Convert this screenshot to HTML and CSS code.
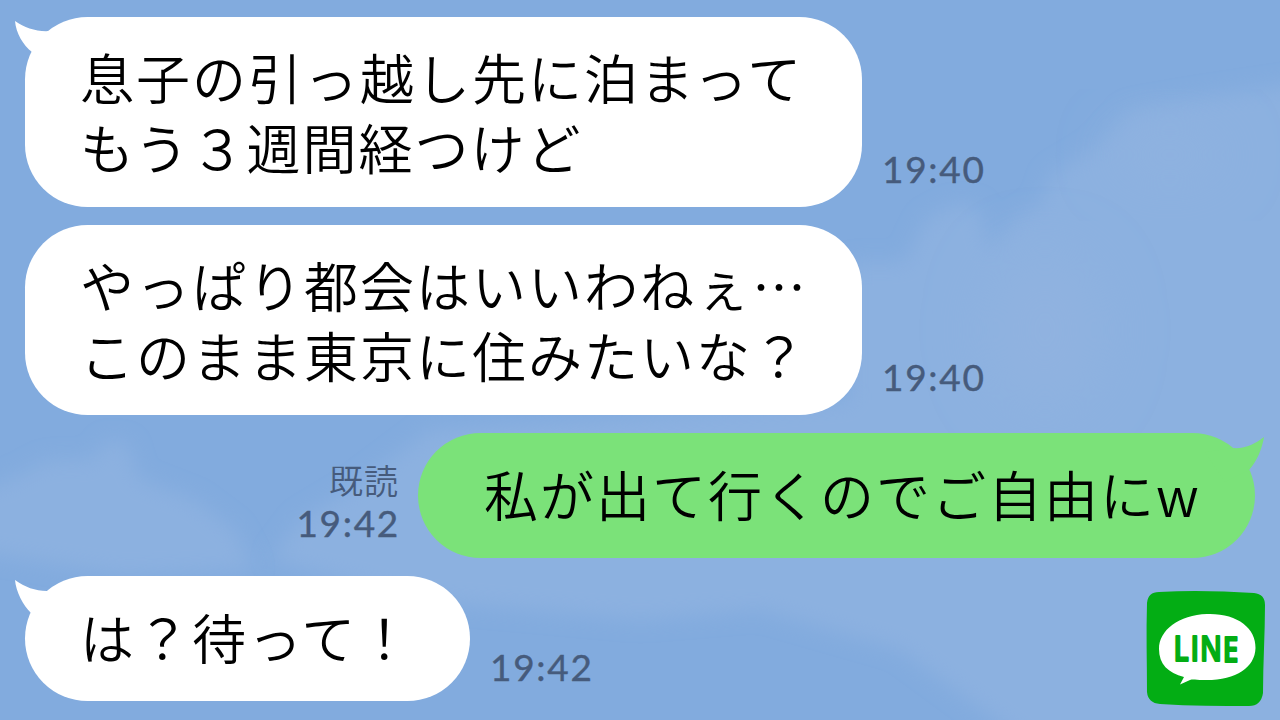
FILE: index.html
```html
<!DOCTYPE html>
<html lang="ja">
<head>
    <meta charset="UTF-8">
    <meta name="viewport" content="width=device-width, initial-scale=1.0">
    <title>LINE トーク</title>
    <link rel="stylesheet" href="styles.css">
</head>
<body>
    <svg class="sky" viewBox="0 0 1280 720" aria-hidden="true">
        <defs>
            <filter id="soft" x="-20%" y="-20%" width="140%" height="140%"><feGaussianBlur stdDeviation="10"/></filter>
            <filter id="softer" x="-60%" y="-100%" width="220%" height="300%"><feGaussianBlur stdDeviation="28"/></filter>
        </defs>
        <path class="cloud" filter="url(#soft)" d="M850 262 L905 262 L925 220 L955 204 L978 206 L990 252 L1012 222 L1040 205 L1050 175 L1095 148 L1130 110 L1200 98 L1320 80 L1320 760 L1050 760 L900 650 L760 610 L640 620 L420 600 L270 560 L300 520 L350 490 L430 430 L600 420 L850 400 Z"/>
        <path class="cloud" filter="url(#soft)" d="M-30 495 L20 475 L48 460 L92 460 L108 440 L128 444 L138 478 L195 500 L235 530 L255 570 L120 575 L-30 550 Z"/>
        <ellipse class="haze" filter="url(#softer)" cx="1170" cy="155" rx="55" ry="22"/>
        <ellipse class="haze" filter="url(#softer)" cx="1045" cy="330" rx="60" ry="80"/>
    </svg>

    <main class="chat">
        <div class="message">
            <div class="bubble">
                <svg class="tail" viewBox="0 0 60 50"><path d="M0 3 C10 10 22 14 35 13 L60 18 L40 48 L17 34 C8 27 1 15 0 3Z"/></svg>
                <p>息子の引っ越し先に泊まって<br>もう３週間経つけど</p>
            </div>
            <div class="meta"><time>19:40</time></div>
        </div>

        <div class="message">
            <div class="bubble">
                <p>やっぱり都会はいいわねぇ…<br>このまま東京に住みたいな？</p>
            </div>
            <div class="meta"><time>19:40</time></div>
        </div>

        <div class="message mine">
            <div class="meta">
                <span class="read">既読</span>
                <time>19:42</time>
            </div>
            <div class="bubble">
                <svg class="tail" viewBox="0 0 60 50"><path d="M1 3 C10 10 20 15 32 14 L60 18 L40 48 L16 36 C8 27 3 15 1 3Z"/></svg>
                <p>私が出て行くのでご自由にw</p>
            </div>
        </div>

        <div class="message short">
            <div class="bubble">
                <svg class="tail" viewBox="0 0 60 50"><path d="M0 3 C10 10 20 14 32 14 L60 18 L40 48 L16 36 C8 28 1 15 0 3Z"/></svg>
                <p>は？待って！</p>
            </div>
            <div class="meta"><time>19:42</time></div>
        </div>
    </main>

    <svg class="line-logo" viewBox="0 0 120 117">
        <path class="logo-bg" d="M13 2 C45 0 75 1 108 3 Q119 4 119 15 C119 43 117 73 117 103 Q115 116 103 116 C75 116 45 116 14 114 Q2 113 1 102 C1 73 0 43 1 13 Q2 2 13 2Z"/>
        <path class="logo-balloon" d="M61 24 C91 23 110 38 109.500 58 C109 78 89 91 57 90 C50 90 47 89 44 90 L34 94.500 L38 87 C22 83 13 74 13 59 C13 40 33 25 61 24Z"/>
        <text class="logo-text" transform="scale(0.8 1)" x="34.500 55.500 67.500 96" y="71.500 71.500 71.500 72.500">LINE</text>
    </svg>
</body>
</html>
```
FILE: styles.css
```css
:root {
    --sky: #82abde;
    --cloud: #8cb1e0;
    --haze: #90b2e0;
    --green: #7be279;
    --meta: #465b7c;
}
* {
    box-sizing: border-box;
}
body {
    margin: 0;
    width: 1280px;
    height: 720px;
    overflow: hidden;
    position: relative;
    background: var(--sky);
    font-family: 'Noto Sans CJK JP', sans-serif;
}
.sky {
    position: absolute;
    top: 0;
    left: 0;
    width: 100%;
    height: 100%;
}
.cloud {
    fill: var(--cloud);
}
.haze {
    fill: var(--haze);
}
.chat {
    position: relative;
    display: flex;
    flex-direction: column;
    gap: 18px;
    padding: 17px 25px;
}
.message {
    display: flex;
    align-items: flex-end;
    gap: 20px;
}
.bubble {
    position: relative;
    width: 837px;
    padding: 25px 0 25px 55px;
    border-radius: 62.5px;
    background: #fff;
    color: #000;
}
.bubble p {
    margin: 0;
    font-size: 54px;
    font-weight: 350;
    line-height: 70px;
    letter-spacing: 2px;
    white-space: nowrap;
}
.short .bubble,
.mine .bubble {
    padding-top: 26px;
    padding-bottom: 29px;
}
.short .bubble {
    width: 445px;
}
.tail {
    position: absolute;
    top: 1px;
    left: -10px;
    width: 60px;
    height: 50px;
    fill: #fff;
}
.mine {
    justify-content: flex-end;
}
.mine .bubble {
    padding-left: 66px;
    background: var(--green);
}
.mine .tail {
    left: auto;
    right: -10px;
    fill: var(--green);
    transform: scaleX(-1);
}
.meta {
    display: flex;
    flex-direction: column;
    padding-bottom: 16px;
    color: var(--meta);
    font-family: Lato, sans-serif;
    font-size: 37px;
    line-height: 44px;
    letter-spacing: 1.7px;
}
.meta time {
    -webkit-text-stroke: 0.4px var(--meta);
}
.short .meta {
    padding-bottom: 12px;
}
.mine .meta {
    align-items: flex-end;
    padding-bottom: 13px;
    margin-right: -2px;
}
.read {
    font-family: 'Noto Sans CJK JP', sans-serif;
    font-size: 34px;
    font-weight: 350;
    line-height: 42px;
    letter-spacing: 1px;
    margin-right: 1px;
}
.line-logo {
    position: absolute;
    left: 1146px;
    top: 590px;
    width: 120px;
    height: 117px;
}
.logo-bg {
    fill: #03ad14;
}
.logo-balloon {
    fill: #fff;
}
.logo-text {
    font-family: 'Open Sans', sans-serif;
    font-size: 35px;
    font-weight: 600;
    fill: #03ad14;
    stroke: #03ad14;
    stroke-width: 2;
    stroke-linejoin: round;
}
```
